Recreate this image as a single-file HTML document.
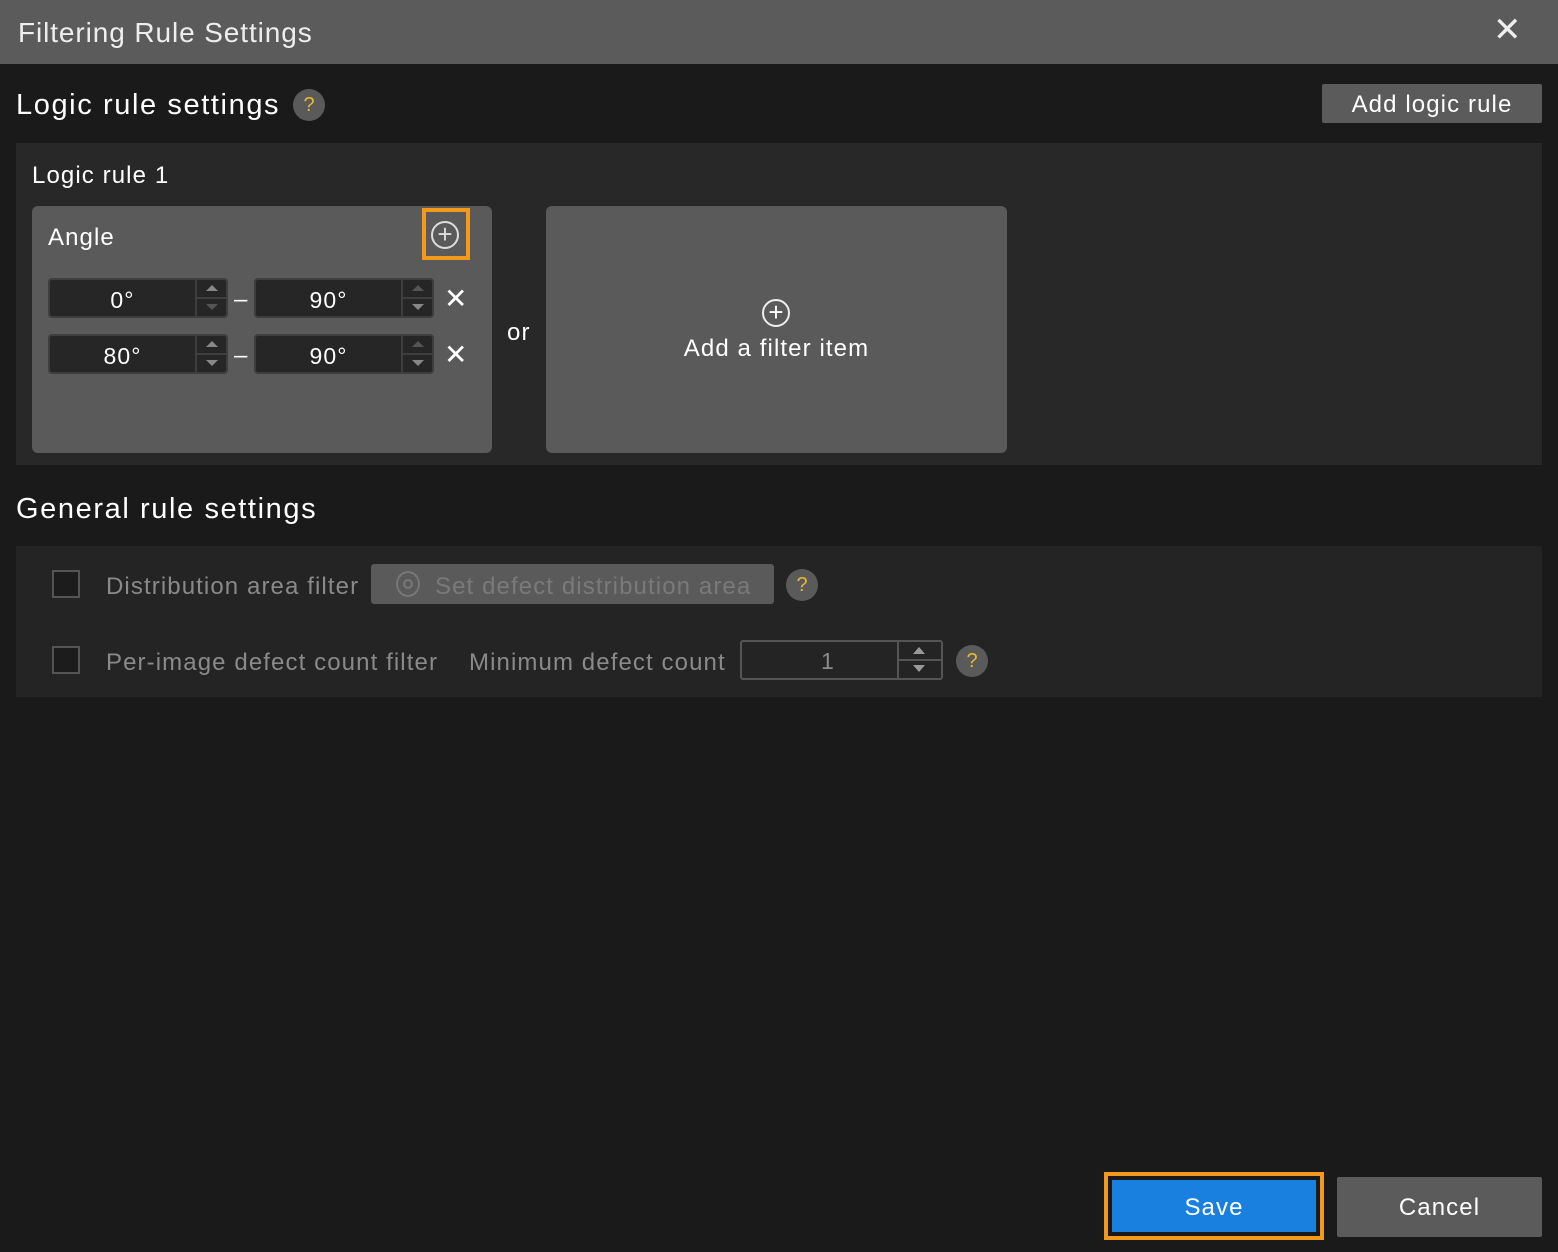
<!DOCTYPE html><html><head><style>
*{margin:0;padding:0;box-sizing:border-box}
body{width:1558px;height:1252px;background:#1a1a1a;font-family:"Liberation Sans",sans-serif;color:#fff;position:relative;overflow:hidden;letter-spacing:1.1px}
.a{position:absolute}
.h{font-size:29px;letter-spacing:1.6px}
.inp{position:absolute;width:180px;height:40px;border:2px solid #3e3e3e;border-radius:4px;background:#262626}
.inp .t{position:absolute;left:0;width:145px;top:7px;text-align:center;font-size:23px}
.inp .sp{position:absolute;left:145px;top:0;width:33px;height:36px;border-left:2px solid #3e3e3e}
.inp .sp:after{content:"";position:absolute;left:0;right:0;top:17px;border-top:2px solid #3e3e3e}
.up{position:absolute;left:9px;top:5px;border:6px solid transparent;border-bottom:6px solid #888;border-top:0}
.dn{position:absolute;left:9px;top:24px;border:6px solid transparent;border-top:6px solid #888;border-bottom:0}
.q{position:absolute;width:32px;height:32px;border-radius:50%;background:#5a5a5a;color:#e8b830;font-size:20px;text-align:center;line-height:32px;letter-spacing:0}
</style></head><body>
<div class="a" style="left:0;top:0;width:1558px;height:64px;background:#5b5b5b"></div>
<div class="a" style="left:18px;top:17px;font-size:28px;color:#eee;letter-spacing:0.9px">Filtering Rule Settings</div>
<div class="a" style="left:1493px;top:10px;font-size:34px;color:#eee">✕</div>
<div class="a h" style="left:16px;top:89px">Logic rule settings</div>
<div class="q" style="left:293px;top:89px">?</div>
<div class="a" style="left:1322px;top:84px;width:220px;height:39px;background:#5b5b5b;border-radius:2px;font-size:24px;text-align:center;line-height:41px">Add logic rule</div>
<div class="a" style="left:16px;top:143px;width:1526px;height:322px;background:#282828"></div>
<div class="a" style="left:32px;top:162px;font-size:24px">Logic rule 1</div>
<div class="a" style="left:32px;top:206px;width:460px;height:247px;background:#5a5a5a;border-radius:6px"></div>
<div class="a" style="left:48px;top:224px;font-size:24px">Angle</div>
<div class="a" style="left:422px;top:208px;width:48px;height:52px;border:4px solid #f39a1e"></div>
<div class="a" style="left:431px;top:221px;width:28px;height:28px;border:2px solid #ddd;border-radius:50%;text-align:center;line-height:22px;font-size:26px;color:#ddd;letter-spacing:0">+</div>
<div class="inp" style="left:48px;top:278px"><div class="t">0°</div><div class="sp"><div class="up"></div><div class="dn" style="border-top-color:#555"></div></div></div>
<div class="inp" style="left:254px;top:278px"><div class="t">90°</div><div class="sp"><div class="up" style="border-bottom-color:#555"></div><div class="dn"></div></div></div>
<div class="inp" style="left:48px;top:334px"><div class="t">80°</div><div class="sp"><div class="up"></div><div class="dn"></div></div></div>
<div class="inp" style="left:254px;top:334px"><div class="t">90°</div><div class="sp"><div class="up" style="border-bottom-color:#555"></div><div class="dn"></div></div></div>
<div class="a" style="left:234px;top:286px;font-size:24px">–</div>
<div class="a" style="left:234px;top:342px;font-size:24px">–</div>
<div class="a" style="left:444px;top:282px;font-size:28px">✕</div>
<div class="a" style="left:444px;top:338px;font-size:28px">✕</div>
<div class="a" style="left:507px;top:319px;font-size:24px">or</div>
<div class="a" style="left:546px;top:206px;width:461px;height:247px;background:#5a5a5a;border-radius:6px"></div>
<div class="a" style="left:762px;top:299px;width:28px;height:28px;border:2px solid #eee;border-radius:50%;text-align:center;line-height:22px;font-size:26px;letter-spacing:0">+</div>
<div class="a" style="left:546px;top:335px;width:461px;text-align:center;font-size:24px">Add a filter item</div>
<div class="a h" style="left:16px;top:493px">General rule settings</div>
<div class="a" style="left:16px;top:546px;width:1526px;height:151px;background:#242424"></div>
<div class="a" style="left:52px;top:570px;width:28px;height:28px;border:2px solid #555;background:#1c1c1c"></div>
<div class="a" style="left:52px;top:646px;width:28px;height:28px;border:2px solid #555;background:#1c1c1c"></div>
<div class="a" style="left:106px;top:573px;font-size:24px;color:#8a8a8a">Distribution area filter</div>
<div class="a" style="left:371px;top:564px;width:403px;height:40px;background:#5a5a5a;border-radius:3px"></div>
<div class="a" style="left:396px;top:571px;width:24px;height:26px;border:2px solid #777;border-radius:50%"></div>
<div class="a" style="left:403px;top:579px;width:10px;height:10px;border:2px solid #777;border-radius:50%"></div>
<div class="a" style="left:435px;top:573px;font-size:24px;color:#7a7a7a">Set defect distribution area</div>
<div class="q" style="left:786px;top:569px">?</div>
<div class="a" style="left:106px;top:649px;font-size:24px;color:#8a8a8a">Per-image defect count filter</div>
<div class="a" style="left:469px;top:649px;font-size:24px;color:#8a8a8a">Minimum defect count</div>
<div class="a" style="left:740px;top:640px;width:203px;height:40px;border:2px solid #555;border-radius:3px"></div>
<div class="a" style="left:740px;top:648px;width:176px;text-align:center;font-size:23px;color:#8a8a8a">1</div>
<div class="a" style="left:897px;top:642px;width:2px;height:36px;background:#555"></div>
<div class="a" style="left:899px;top:659px;width:42px;height:2px;background:#555"></div>
<div class="a" style="left:913px;top:647px;border:6px solid transparent;border-bottom:7px solid #999;border-top:0"></div>
<div class="a" style="left:913px;top:665px;border:6px solid transparent;border-top:7px solid #999;border-bottom:0"></div>
<div class="q" style="left:956px;top:645px">?</div>
<div class="a" style="left:1104px;top:1172px;width:220px;height:68px;border:4px solid #f39a1e"></div>
<div class="a" style="left:1112px;top:1180px;width:204px;height:52px;background:#1a80e0;font-size:24px;text-align:center;line-height:55px">Save</div>
<div class="a" style="left:1337px;top:1177px;width:205px;height:60px;background:#5b5b5b;border-radius:2px;font-size:24px;text-align:center;line-height:62px">Cancel</div>
</body></html>
